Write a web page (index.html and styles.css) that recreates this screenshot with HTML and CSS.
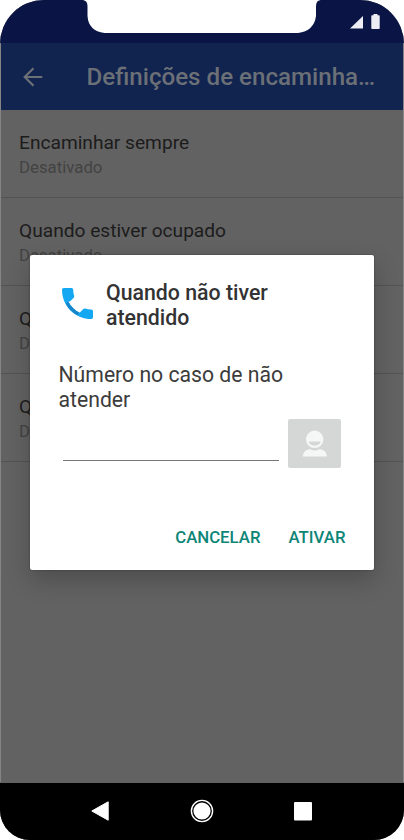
FILE: index.html
```html
<!DOCTYPE html>
<html lang="pt">
<head>
    <meta charset="UTF-8">
    <meta name="viewport" content="width=device-width, initial-scale=1.0">
    <title>Definições de encaminhamento</title>
    <link rel="stylesheet" href="styles.css">
</head>
<body>
    <div class="phone">
        <div class="status-bar">
            <svg class="signal" width="13" height="13" viewBox="0 0 13 13"><path d="M13 0V12.500H0Z"/></svg>
            <svg class="battery" width="9" height="15" viewBox="0 0 9 15"><path d="M2.5 0h4v1.3H8a.7.7 0 0 1 .7.7v12.3a.7.7 0 0 1-.7.7H1a.7.7 0 0 1-.7-.7V2a.7.7 0 0 1 .7-.7h1.5Z"/></svg>
        </div>
        <svg class="notch" width="238" height="34" viewBox="0 0 238 34">
            <path d="M0 0Q4.500 .7 4.500 6V16Q5.500 31 21.500 33H215Q231 31 233 16V6Q233 .7 237.500 0Z"/>
        </svg>

        <header class="app-bar">
            <svg class="back" width="20" height="20" viewBox="0 0 20 20"><path d="M19.3 10H2M10.5 1.2L1.7 10l8.8 8.8"/></svg>
            <h1>Definições de encaminha…</h1>
        </header>

        <ul class="settings">
            <li><b>Encaminhar sempre</b><span>Desativado</span></li>
            <li><b>Quando estiver ocupado</b><span>Desativado</span></li>
            <li><b>Quando</b><span>Desativado</span></li>
            <li><b>Quando</b><span>Desativado</span></li>
        </ul>

        <nav class="nav-bar">
            <svg width="18" height="20" viewBox="0 0 18 20"><path d="M17.2 .8V19.2L.8 10Z" stroke="#fff" stroke-linejoin="round"/></svg>
            <svg width="24" height="24" viewBox="0 0 24 24"><circle cx="12" cy="12" r="10.6" fill="none" stroke="#fff" stroke-width="1.4"/><circle cx="12" cy="12" r="8.6"/></svg>
            <svg width="18" height="19" viewBox="0 0 18 19"><rect width="18" height="18.5" rx="1"/></svg>
        </nav>

        <div class="dialog">
            <div class="dialog-title">
                <svg width="31" height="31" viewBox="3 3 18 18">
                    <path d="M6.62 10.79c1.44 2.83 3.76 5.14 6.59 6.59l2.2-2.2c.27-.27.67-.36 1.02-.24 1.12.37 2.33.57 3.57.57.55 0 1 .45 1 1V20c0 .55-.45 1-1 1C10.610 21 3 13.390 3 4c0-.55.45-1 1-1h4.500c.55 0 1 .45 1 1 0 1.250.2 2.450.57 3.570.11.35.03.74-.25 1.020l-2.200 2.200Z" fill="#14a8f2"/>
                    <path d="M6.620 10.790c1.440 2.830 3.760 5.140 6.590 6.590L11.800 18.800C8.900 17.300 6.600 15 5.200 12.200Z" fill="#1687cc"/>
                </svg>
                <h2>Quando não tiver atendido</h2>
            </div>
            <p>Número no caso de não atender</p>
            <div class="field">
                <input type="text">
                <button class="contact">
                    <svg width="26" height="28" viewBox="0 0 26 28">
                        <circle cx="12.700" cy="9.300" r="8.700" fill="#f5f6f6"/>
                        <path d="M6.800 11.500H18.600C18 17 7.400 17 6.800 11.500Z" fill="#d5d7d7"/>
                        <path d="M.7 26.500C1.500 21.500 4.500 19.200 8 19.200Q12.700 22 17.400 19.200C21 19.200 24.400 21.500 25.100 26.500Z" fill="#f5f6f6"/>
                    </svg>
                </button>
            </div>
            <div class="actions">
                <button>CANCELAR</button>
                <button>ATIVAR</button>
            </div>
        </div>
    </div>
</body>
</html>
```
FILE: styles.css
```css
* {
    margin: 0;
    padding: 0;
    box-sizing: border-box;
    font-family: Roboto, Arial, sans-serif;
}
body {
    background-color: #fff;
}
svg {
    display: block;
    flex: none;
}
.phone {
    position: relative;
    display: flex;
    flex-direction: column;
    width: 404px;
    height: 840px;
    overflow: hidden;
    border-radius: 44px 44px 30px 30px;
    background-color: #626262;
}
.phone::after {
    content: "";
    position: absolute;
    inset: 43px 0 58px;
    border: solid #858585;
    border-width: 0 1px;
    pointer-events: none;
}
.status-bar {
    display: flex;
    justify-content: flex-end;
    align-items: flex-start;
    gap: 8px;
    height: 43px;
    padding: 14px 24px 0 0;
    background-color: #0a1545;
    fill: #eceef4;
}
.signal {
    margin-top: 2px;
}
.notch {
    position: absolute;
    top: 0;
    left: 83px;
    fill: #fff;
}
.app-bar {
    display: flex;
    align-items: center;
    height: 67px;
    padding-left: 23px;
    background-color: #11234f;
}
.back {
    fill: none;
    stroke: #6b7077;
    stroke-width: 2.2;
}
.app-bar h1 {
    margin-left: 43.5px;
    padding-top: 1px;
    color: #6b7077;
    font-size: 24.15px;
    font-weight: 500;
    white-space: nowrap;
}
.settings {
    flex: 1;
    list-style: none;
}
.settings li {
    display: flex;
    flex-direction: column;
    height: 88px;
    padding: 21px 19px 0;
    border-bottom: 1px solid #535353;
}
.settings b {
    color: #1c1c1c;
    font-size: 19.15px;
    font-weight: 400;
    line-height: 24px;
    white-space: nowrap;
}
.settings span {
    color: #434343;
    font-size: 16.8px;
    line-height: 25px;
}
.nav-bar {
    display: flex;
    justify-content: space-between;
    align-items: center;
    height: 57px;
    padding: 0 92px 1px 91px;
    background-color: #000;
    fill: #fff;
}
.dialog {
    position: absolute;
    top: 255px;
    left: 30px;
    width: 344px;
    height: 315px;
    padding: 25px 28.5px 0 28.5px;
    border-radius: 2px;
    background-color: #fff;
    box-shadow: 0 10px 24px rgba(0, 0, 0, 0.22), 0 0 2px rgba(0, 0, 0, 0.4);
}
.dialog-title {
    display: flex;
    align-items: center;
    gap: 13px;
    padding-left: 3.5px;
}
.dialog-title svg {
    margin-top: -3px;
}
.dialog h2 {
    width: 190px;
    color: #333;
    font-size: 21.3px;
    font-weight: 500;
    line-height: 25px;
}
.dialog p {
    width: 250px;
    margin-top: 32px;
    color: #3c3c3c;
    font-size: 21.2px;
    line-height: 25px;
}
.field {
    display: flex;
    justify-content: space-between;
    margin-top: 7px;
    padding: 0 4.5px;
}
.field input {
    width: 216px;
    height: 42px;
    border: none;
    border-bottom: 1px solid #777;
    outline: none;
    font-size: 20px;
}
.contact {
    display: flex;
    justify-content: center;
    align-items: center;
    width: 53px;
    height: 49px;
    border: none;
    border-radius: 2px;
    background-color: #d5d7d7;
}
.actions {
    display: flex;
    justify-content: flex-end;
    gap: 28px;
    margin-top: 57px;
}
.actions button {
    border: none;
    background: none;
    color: #0d8577;
    font-size: 16.8px;
    font-weight: 500;
    line-height: 24px;
}
```
